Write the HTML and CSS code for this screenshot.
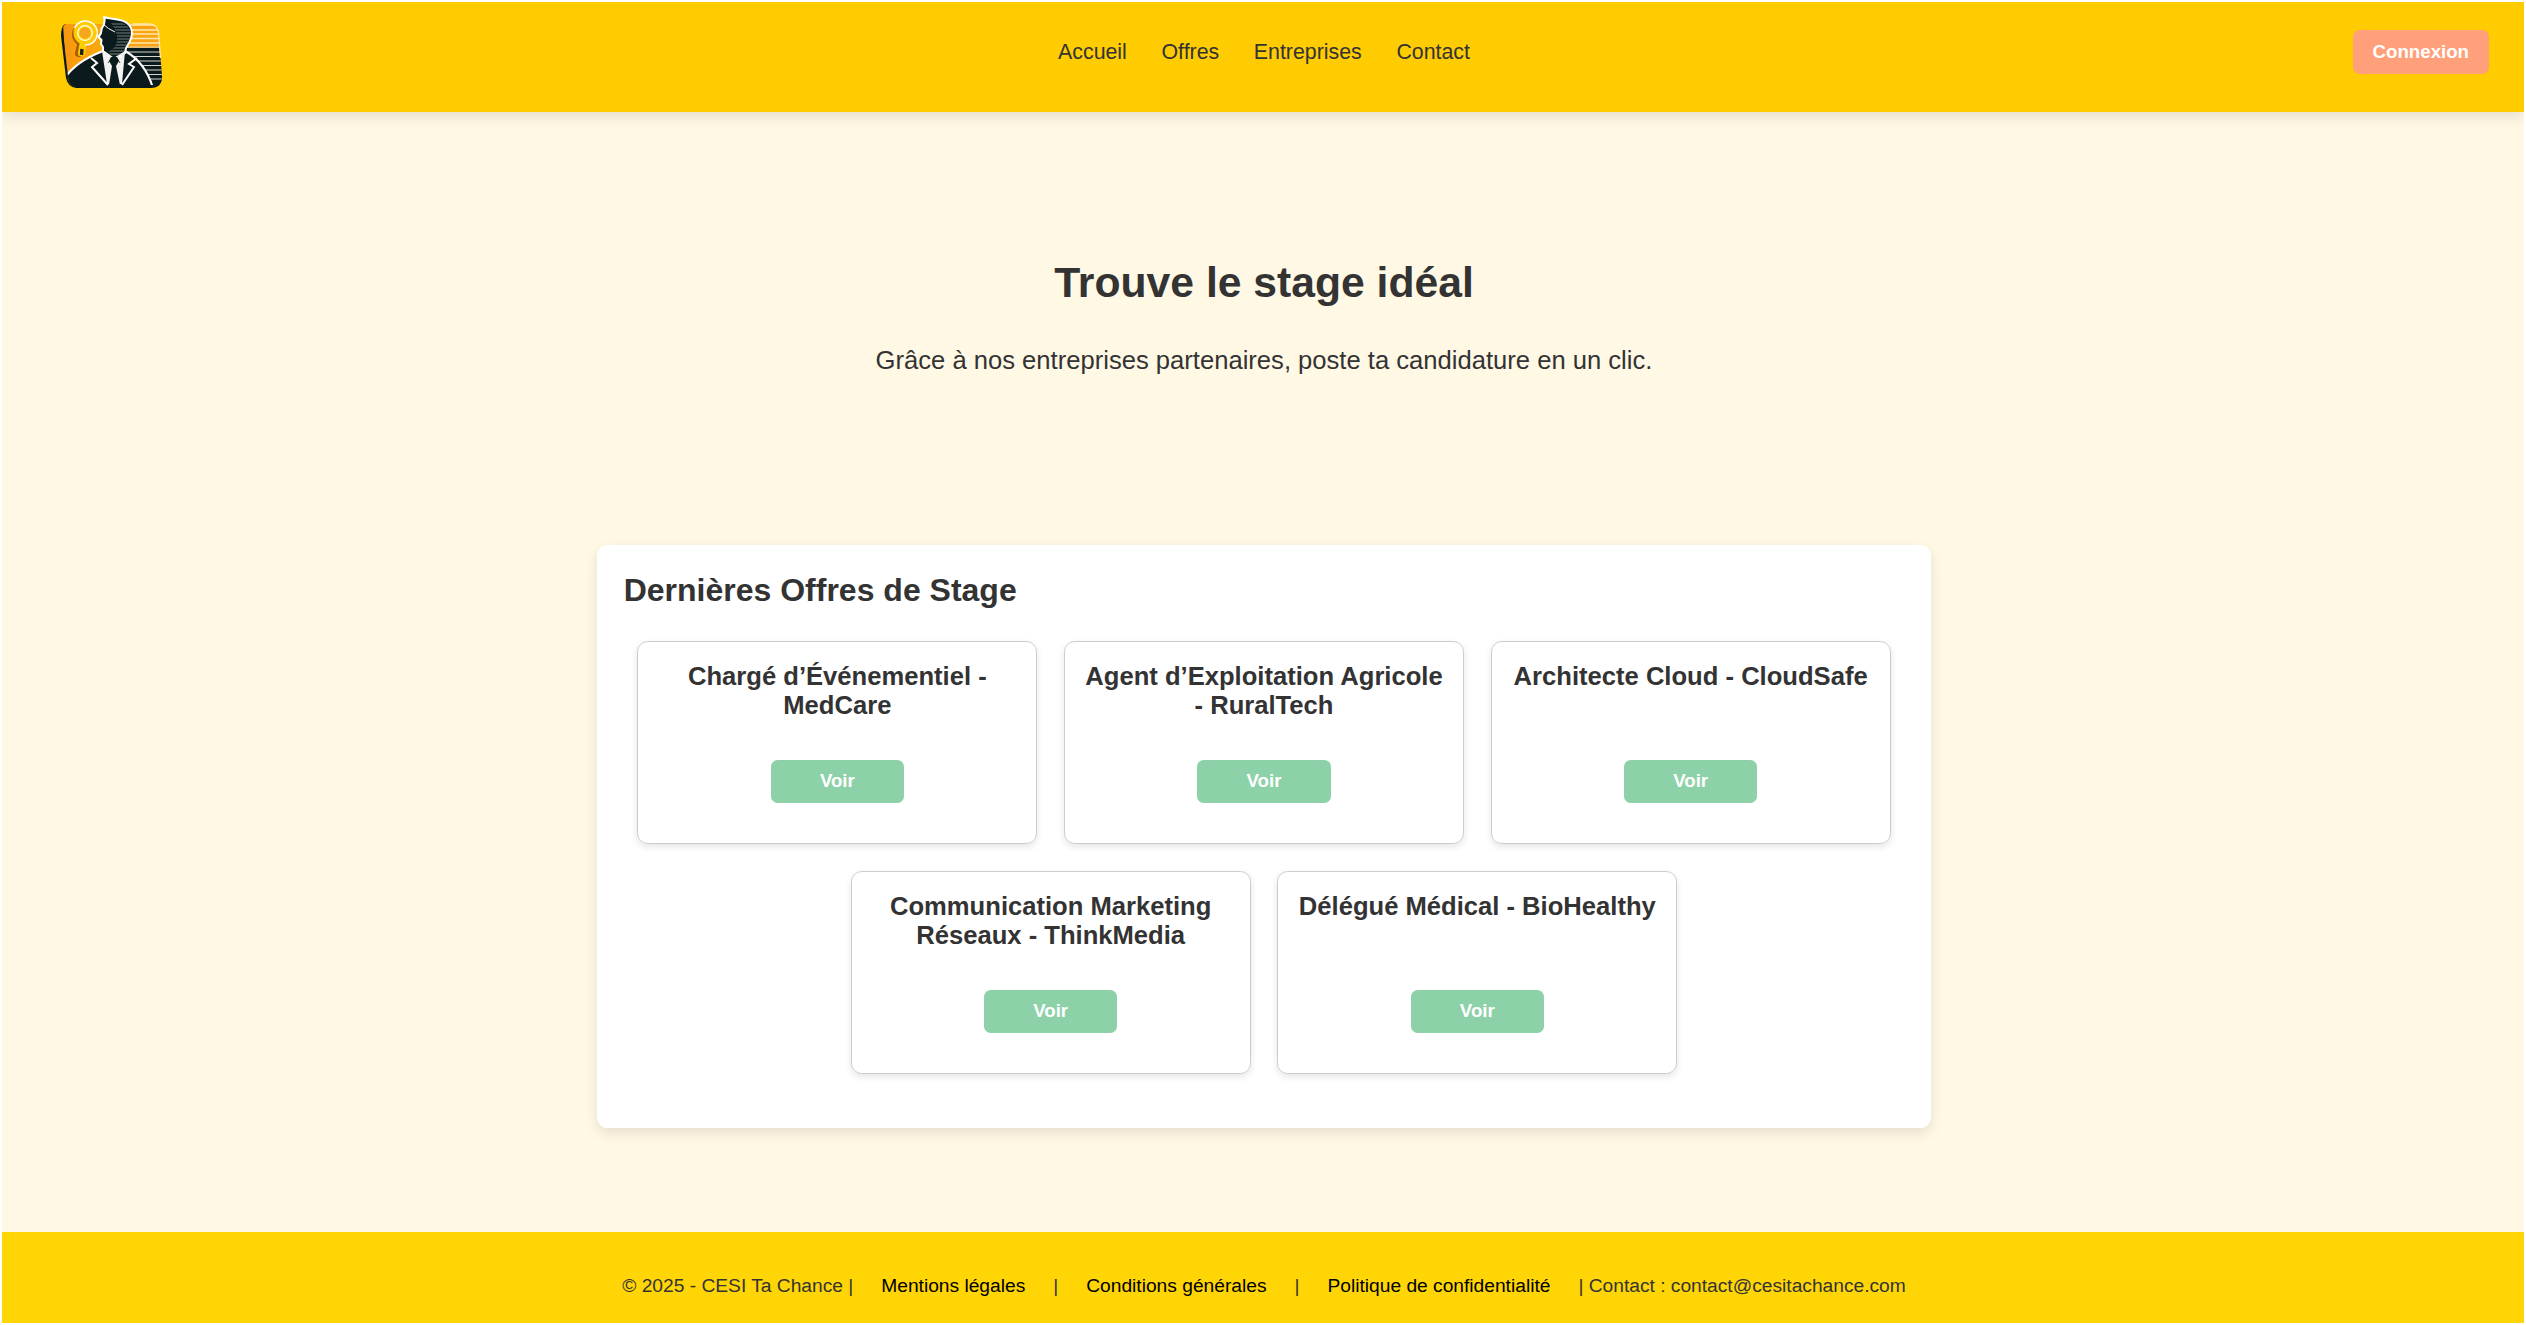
FILE: index.html
```html
<!DOCTYPE html>
<html lang="fr">
<head>
<meta charset="utf-8">
<title>CESI Ta Chance</title>
<link rel="stylesheet" href="styles.css">
</head>
<body>
<header class="header">
  <svg class="logo" viewBox="0 0 102 75" role="img" aria-label="CESI Ta Chance">
    <defs>
      <clipPath id="frame"><path d="M5 8H88Q96 8 97.500 16L101 60Q101 71 91 71H16Q9 71 7.500 64L2 18Q1 8 5 8Z"/></clipPath>
      <clipPath id="hair"><path d="M50 7C60 5 68 8 69.500 16C70.500 23 66 28 63 34V38L53 43L47 36C54 33 57 27 56 20C55 14 52 10 50 7Z"/></clipPath>
      <linearGradient id="amber" x1="0" x2="1"><stop offset="0" stop-color="#f7960f"/><stop offset="1" stop-color="#ffb908"/></linearGradient>
    </defs>
    <path fill="#0b1a1c" d="M4 8H20L30 72H15Q7 71 5 62L0 20Q0 10 4 8Z"/>
    <path fill="#0b1a1c" d="M12 60H101Q101 72 90 72H16Z"/>
    <g clip-path="url(#frame)">
      <path fill="url(#amber)" d="M2 8H70V72H6Z"/>
      <path fill="#fca40f" d="M66 8H102V32H66Z"/>
      <path fill="#0b1a1c" d="M62 32H102V72H62Z"/>
      <path stroke="#ffe9b0" stroke-width="1.400" d="M66 9H100M69 14H100M70 18H100M70 22.500H100M69 27H100"/>
      <path stroke="#d5d6d0" stroke-width="1.200" d="M66 31H102M65 36H102M67 40.500H102M70 45H102M74 49.500H102M79 54H102M84 58.500H102M87 63H102"/>
      <path fill="#0b1a1c" stroke="#fff" stroke-width="2" d="M4 62Q14 46 42 35L64 35Q84 46 92 72H4Z"/>
      <path fill="#0b1a1c" d="M4 69H102V72H4Z"/>
    </g>
    <path fill="none" stroke="#ffe9b0" stroke-width="1.300" d="M72 8H88Q96 8 97.500 16L99.500 42"/>
    <path fill="#0b1a1c" stroke="#fff" stroke-width="2" stroke-linejoin="round" d="M43 1C50 4 65 1 70 12C73 20 68 27 65 32L64 37L53 43L42 35V31L40 28L40.500 24L37.500 21Q41 17 40.500 13Q45 7 43 1Z"/>
    <path fill="none" stroke="#fff" stroke-width="1" d="M42 8Q47 13 54 16"/>
    <g clip-path="url(#hair)"><path stroke="#777d7d" stroke-width="1.100" d="M45 8H72M45 11H72M45 14H72M45 17H72M45 20H72M45 23H72M45 26H72M45 29H72M45 32H72M45 35H72M45 38H72"/></g>
    <path fill="#f2f2f0" d="M41 35L53 42L64 35L61 68H46Z"/>
    <path fill="#0b1a1c" d="M50 41H56L58 45L55 50L59 69H48L51 50L48 45Z"/>
    <path fill="none" stroke="#0b1a1c" stroke-width=".8" d="M47 47L51 42L53 44L56 42L59 47"/>
    <path fill="none" stroke="#fff" stroke-width="2" d="M30 42L36 47L31 51L47 69M76 42L68 48L73 51L61 69"/>
    <path stroke="#a95f09" stroke-width="8" stroke-linecap="round" d="M20 29L18 37"/>
    <circle cx="22.500" cy="18.500" r="10" fill="none" stroke="#a95f09" stroke-width="3"/>
    <path stroke="#fc0" stroke-width="7" stroke-linecap="round" d="M22 28L20.500 37"/>
    <path stroke="#18201c" stroke-width="3.400" d="M21 33L20.500 39"/>
    <circle cx="24" cy="17" r="8.500" fill="#f7a51b" stroke="#fc0" stroke-width="6"/>
    <path fill="none" stroke="#fff" stroke-width="1.500" d="M13.500 12A12 12 0 1 1 24 29"/>
    <circle cx="24" cy="17" r="7.300" fill="none" stroke="#fff" stroke-width="1.200"/>
  </svg>
  <nav class="nav">
    <a href="#">Accueil</a>
    <a href="#">Offres</a>
    <a href="#">Entreprises</a>
    <a href="#">Contact</a>
  </nav>
  <a class="login" href="#">Connexion</a>
</header>
<main class="main">
  <section class="hero">
    <h1>Trouve le stage idéal</h1>
    <p>Grâce à nos entreprises partenaires, poste ta candidature en un clic.</p>
  </section>
  <section class="offers">
    <h2>Dernières Offres de Stage</h2>
    <div class="cards">
      <article class="card"><h3>Chargé d’Événementiel - MedCare</h3><a class="view" href="#">Voir</a></article>
      <article class="card"><h3>Agent d’Exploitation Agricole - RuralTech</h3><a class="view" href="#">Voir</a></article>
      <article class="card"><h3>Architecte Cloud - CloudSafe</h3><a class="view" href="#">Voir</a></article>
      <article class="card"><h3>Communication Marketing Réseaux - ThinkMedia</h3><a class="view" href="#">Voir</a></article>
      <article class="card"><h3>Délégué Médical - BioHealthy</h3><a class="view" href="#">Voir</a></article>
    </div>
  </section>
</main>
<footer class="footer">
  <p>© 2025 - CESI Ta Chance | <a href="#">Mentions légales</a> | <a href="#">Conditions générales</a> | <a href="#">Politique de confidentialité</a> | Contact : contact@cesitachance.com</p>
</footer>
</body>
</html>
```
FILE: styles.css
```css
* { box-sizing: border-box; margin: 0; padding: 0; }
html { background: #fff; }
body {
  display: flex;
  flex-direction: column;
  height: 1325px;
  border: 2px solid #fff;
  background: #fff8e5;
  color: #333;
  font-family: Arial, "Liberation Sans", sans-serif;
  font-size: 21.333px;
}
a { color: inherit; text-decoration: none; }

.header {
  display: grid;
  grid-template-columns: 1fr auto 1fr;
  align-items: start;
  height: 110px;
  padding: 14px 35px 0 59px;
  background: #ffcc02;
  box-shadow: 0 5px 13px rgba(0, 0, 0, .1);
}
.logo { width: 102px; height: 75px; }
.nav {
  display: flex;
  gap: 34.667px;
  padding-top: 24px;
  line-height: 24px;
  transform: translateX(-11px);
}
.login {
  justify-self: end;
  margin-top: 14px;
  padding: 0 20px;
  border-radius: 6.667px;
  background: #ffa07a;
  color: #fff;
  font-size: 18.667px;
  font-weight: bold;
  line-height: 44px;
}

.main { flex: 1; padding-left: 2px; }
.hero { height: 433px; padding-top: 146px; text-align: center; }
.hero h1 { font-size: 42.667px; line-height: 49px; }
.hero p { margin-top: 39px; font-size: 25.6px; line-height: 29px; }

.offers {
  width: 1334px;
  height: 583px;
  margin: 0 auto;
  padding: 26.667px;
  border-radius: 10.667px;
  background: #fff;
  box-shadow: 0 5px 13px rgba(0, 0, 0, .1);
}
.offers h2 { font-size: 32px; line-height: 37px; }
.cards {
  display: flex;
  flex-wrap: wrap;
  justify-content: center;
  gap: 27.333px 26.667px;
  margin-top: 32.667px;
}
.card {
  display: flex;
  flex-direction: column;
  align-items: center;
  width: 400px;
  height: 202.667px;
  padding: 20px 19px;
  border: 1px solid #ccc;
  border-radius: 10.667px;
  box-shadow: 0 3px 7px rgba(0, 0, 0, .1);
  text-align: center;
}
.card h3 { height: 98px; font-size: 25.6px; line-height: 29px; }
.view {
  width: 133.333px;
  padding-bottom: 1px;
  border-radius: 6.667px;
  background: #8dd1a8;
  color: #fff;
  font-size: 18.667px;
  font-weight: bold;
  line-height: 42px;
}

.footer {
  height: 91px;
  padding: 43px 0 0 2px;
  background: #ffd505;
  text-align: center;
  font-size: 19.2px;
  line-height: 22px;
}
.footer a { margin: 0 22.667px; color: #000; }
```
